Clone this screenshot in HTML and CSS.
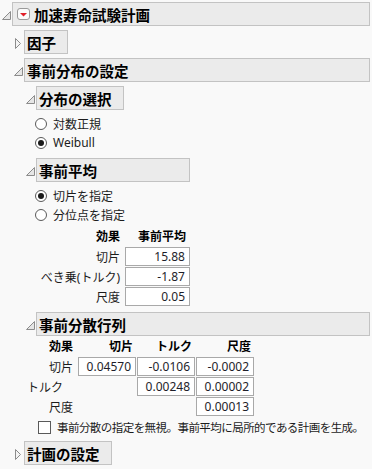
FILE: index.html
```html
<!DOCTYPE html>
<html lang="ja">
<head>
<meta charset="utf-8">
<link rel="stylesheet" href="styles.css">
</head>
<body>
<div class="page">
  <div class="node root">
    <div class="head">
      <span class="tw"><svg class="tri-open" width="9" height="9" viewBox="0 0 9 9"><polygon points="8.5,0.5 8.5,8.5 0.5,8.5"/></svg></span>
      <div class="hbox full rootbox">
        <span class="menu"><svg width="13" height="12" viewBox="0 0 13 12"><rect x="0.5" y="0.5" width="12" height="11" rx="2.5" fill="#fbfbfb" stroke="#9a9a9a"/><polygon points="3,5 10,5 6.5,8.5" fill="#e0202a"/></svg></span>
        <span>加速寿命試験計画</span>
      </div>
    </div>
    <div class="body">
      <div class="node">
        <div class="head">
          <span class="tw"><svg class="tri-closed" width="6" height="11" viewBox="0 0 6 11"><polygon points="0.5,0.5 5.5,5.5 0.5,10.5"/></svg></span>
          <div class="hbox">因子</div>
        </div>
      </div>
      <div class="node">
        <div class="head">
          <span class="tw"><svg class="tri-open" width="9" height="9" viewBox="0 0 9 9"><polygon points="8.5,0.5 8.5,8.5 0.5,8.5"/></svg></span>
          <div class="hbox full">事前分布の設定</div>
        </div>
        <div class="body">
          <div class="node">
            <div class="head">
              <span class="tw"><svg class="tri-open" width="9" height="9" viewBox="0 0 9 9"><polygon points="8.5,0.5 8.5,8.5 0.5,8.5"/></svg></span>
              <div class="hbox w-dist">分布の選択</div>
            </div>
            <div class="content">
              <div class="radio-row"><span class="radio"></span><span>対数正規</span></div>
              <div class="radio-row"><span class="radio on"></span><span>Weibull</span></div>
            </div>
          </div>
          <div class="node">
            <div class="head">
              <span class="tw"><svg class="tri-open" width="9" height="9" viewBox="0 0 9 9"><polygon points="8.5,0.5 8.5,8.5 0.5,8.5"/></svg></span>
              <div class="hbox w-mean">事前平均</div>
            </div>
            <div class="content">
              <div class="radio-row"><span class="radio on"></span><span>切片を指定</span></div>
              <div class="radio-row"><span class="radio"></span><span>分位点を指定</span></div>
              <div class="mean-table">
                <div class="th lbl">効果</div><div class="th val">事前平均</div>
                <div class="lbl">切片</div><div class="cell">15.88</div>
                <div class="lbl">べき乗(トルク)</div><div class="cell">-1.87</div>
                <div class="lbl">尺度</div><div class="cell">0.05</div>
              </div>
            </div>
          </div>
          <div class="node">
            <div class="head">
              <span class="tw"><svg class="tri-open" width="9" height="9" viewBox="0 0 9 9"><polygon points="8.5,0.5 8.5,8.5 0.5,8.5"/></svg></span>
              <div class="hbox full">事前分散行列</div>
            </div>
            <div class="matrix">
              <div class="th lbl">効果</div><div class="th val">切片</div><div class="th val">トルク</div><div class="th val">尺度</div>
              <div class="lbl">切片</div><div class="cell">0.04570</div><div class="cell">-0.0106</div><div class="cell">-0.0002</div>
              <div class="lbl lbl-short">トルク</div><div class="empty"></div><div class="cell">0.00248</div><div class="cell">0.00002</div>
              <div class="lbl">尺度</div><div class="empty"></div><div class="empty"></div><div class="cell">0.00013</div>
            </div>
          </div>
          <div class="check-row"><span class="checkbox"></span><span class="check-text">事前分散の指定を無視。事前平均に局所的である計画を生成。</span></div>
        </div>
      </div>
      <div class="node">
        <div class="head">
          <span class="tw"><svg class="tri-closed" width="6" height="11" viewBox="0 0 6 11"><polygon points="0.5,0.5 5.5,5.5 0.5,10.5"/></svg></span>
          <div class="hbox">計画の設定</div>
        </div>
      </div>
    </div>
  </div>
</div>
</body>
</html>
```

FILE: styles.css
```css
* { box-sizing: border-box; }
html, body { margin: 0; padding: 0; }
body {
  background: #f9f9f9;
  font-family: "Noto Sans", "Noto Sans CJK JP", sans-serif;
  font-size: 12px;
  color: #1c1c1c;
  width: 372px;
  height: 469px;
  overflow: hidden;
}
.page { padding-top: 2px; }
.node { margin-top: 4px; }
.root { margin-top: 0; }
.head { display: flex; align-items: center; height: 24px; }
.tw {
  width: 12px; height: 24px; flex: none;
  display: flex; align-items: center; justify-content: center;
  padding-top: 2px;
}
.tri-open polygon { fill: #e6e6e6; stroke: #8c8c8c; stroke-width: 1; stroke-linejoin: round; }
.tri-closed polygon { fill: #f4f4f4; stroke: #8c8c8c; stroke-width: 1; stroke-linejoin: round; }
.hbox {
  height: 24px;
  background: #ebebeb;
  border: 1px solid #c3c3c3;
  display: flex; align-items: center;
  padding: 0 11px 0 2px;
  font-family: "Noto Sans CJK JP", sans-serif;
  font-weight: 700;
  font-size: 14.5px;
  color: #000;
  white-space: nowrap;
}
.hbox.full { flex: 1; margin-right: 2px; }
.rootbox { padding-left: 4px; gap: 4px; }
.menu { display: flex; align-items: center; }
.w-dist { width: 88px; }
.w-mean { width: 154px; }
.body { padding-left: 12px; }
.content { padding: 4px 0 2px 11px; }
.radio-row { display: flex; align-items: center; height: 19px; gap: 6px; }
.radio {
  width: 12px; height: 12px; border-radius: 50%;
  border: 1px solid #5a5a5a; background: #fff;
  display: flex; align-items: center; justify-content: center;
}
.radio.on::after {
  content: ""; width: 6px; height: 6px; border-radius: 50%; background: #1a1a1a;
}
.lbl { display: flex; align-items: center; justify-content: flex-end; white-space: nowrap; }
.th { font-weight: 700; color: #000; display: flex; align-items: center; }
.th.val { justify-content: flex-end; padding-right: 4px; }
.cell {
  background: #fff;
  border: 1px solid #a9a9a9;
  display: flex; align-items: center; justify-content: flex-end;
  padding-right: 4px;
  color: #1e1e2a;
}
.mean-table {
  display: grid;
  grid-template-columns: 85px 65px;
  grid-template-rows: 21px;
  grid-auto-rows: 19px;
  column-gap: 5px;
  row-gap: 1px;
  margin-top: 1px;
  margin-bottom: 0;
}
.matrix {
  display: grid;
  grid-template-columns: 41px 58px 58px 58px;
  grid-template-rows: 20px;
  grid-auto-rows: 19px;
  column-gap: 1px;
  row-gap: 1px;
  margin-left: 12px;
}
.matrix .lbl { padding-right: 4px; }
.matrix .lbl-short { padding-right: 14px; }
.matrix .th.val { padding-right: 3px; }
.check-row { display: flex; align-items: center; height: 20px; margin-top: 1px; padding-left: 14px; gap: 6px; }
.checkbox { width: 13px; height: 13px; border: 1px solid #5a5a5a; background: #fff; flex: none; }
.check-text { font-size: 11.5px; letter-spacing: -0.55px; white-space: nowrap; }
```
